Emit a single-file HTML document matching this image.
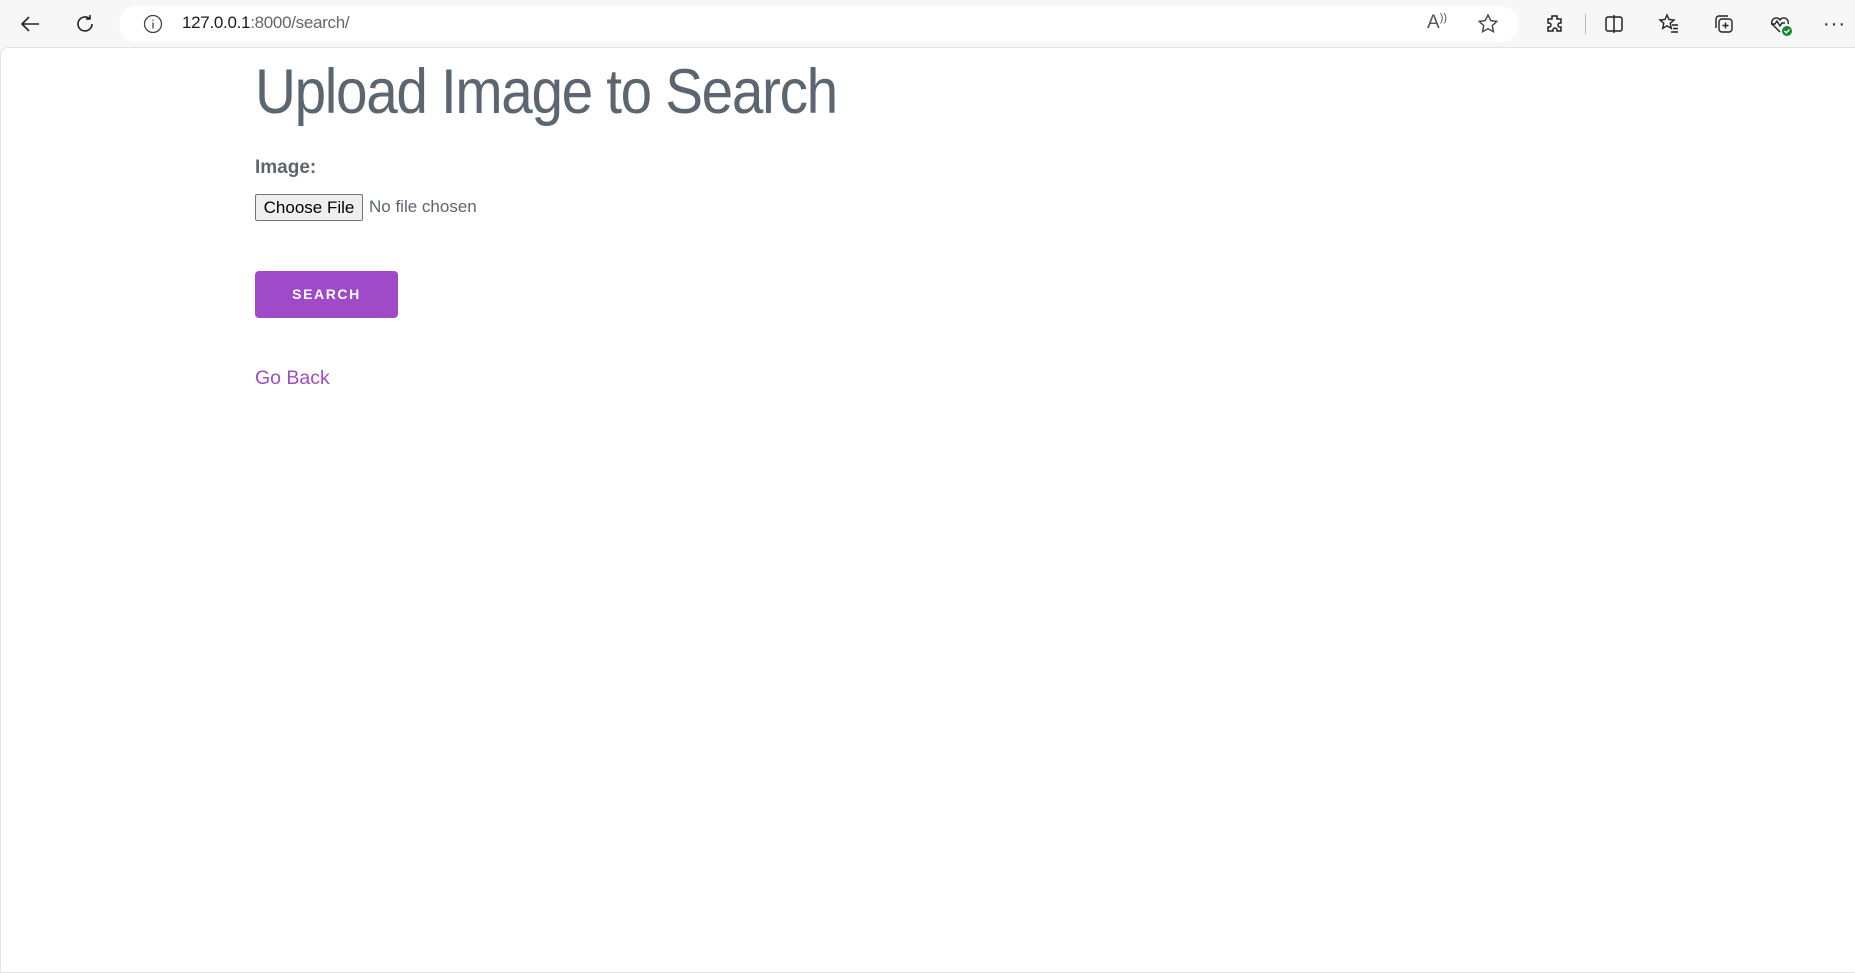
<!DOCTYPE html>
<html><head><meta charset="utf-8"><style>
*{margin:0;padding:0;box-sizing:border-box}
html,body{width:1855px;height:973px;overflow:hidden;background:#f7f7f7;font-family:"Liberation Sans",Arial,sans-serif}
.bar{position:absolute;left:0;top:0;width:1855px;height:48px;background:#f7f7f7}
.addr{position:absolute;left:119px;top:6px;width:1400px;height:36px;background:#fff;border-radius:18px}
.url{position:absolute;left:182px;top:13px;font-size:17px;color:#1a1a1a;letter-spacing:-0.3px}
.url span{color:#666}
.ic{position:absolute;top:12px}
.page{position:absolute;left:0;top:47px;width:1855px;height:926px;background:#fff;border-top-left-radius:8px;border-top:1px solid #e3e3e3;border-left:1px solid #e3e3e3;border-bottom:1px solid #e3e3e3}
h1{position:absolute;left:255px;top:56px;font-size:63px;font-weight:400;color:#5b6670;white-space:nowrap;letter-spacing:-1.5px;transform:scaleX(0.9);transform-origin:left top}
.lbl{position:absolute;left:255px;top:157px;font-size:19px;font-weight:bold;color:#5b6670}
.fbtn{position:absolute;left:255px;top:194px;width:108px;height:27px;background:#efefef;border:1px solid #767676;border-radius:2px;font-size:17px;color:#000;text-align:center;line-height:25px}
.fno{position:absolute;left:369px;top:197px;font-size:17px;color:#5b6670}
.sb{position:absolute;left:255px;top:271px;width:143px;height:47px;background:#9f4bc9;border-radius:4px;color:#fff;font-size:14px;font-weight:bold;letter-spacing:1.6px;text-align:center;line-height:47px}
.back{position:absolute;left:255px;top:367px;font-size:19.5px;color:#a04bc8}
</style></head><body>
<div class="bar">
<svg class="ic" style="left:18px" width="24" height="24" viewBox="0 0 24 24" fill="none" stroke="#222" stroke-width="1.6"><path d="M21 12H4M11 5l-7 7 7 7"/></svg>
<svg class="ic" style="left:73px" width="24" height="24" viewBox="0 0 24 24" fill="none" stroke="#222" stroke-width="1.6"><path d="M19 12a7 7 0 1 1-2.5-5.4M17 3v4h-4"/></svg>
<div class="addr"></div>
<svg class="ic" style="left:142px;top:13px" width="22" height="22" viewBox="0 0 22 22" fill="none" stroke="#444" stroke-width="1.3"><circle cx="11" cy="11" r="8.5"/><path d="M11 9.5v6M11 6.5v1.2"/></svg>
<div class="url">127.0.0.1<span>:8000/search/</span></div>
<div style="position:absolute;left:1427px;top:12px;font-size:19px;color:#555">A<span style="font-size:11px;vertical-align:top">))</span></div>
<svg class="ic" style="left:1476px" width="24" height="24" viewBox="0 0 24 24" fill="none" stroke="#444" stroke-width="1.4"><path d="M12 3l2.7 5.6 6.1.8-4.5 4.2 1.1 6.1L12 16.8 6.6 19.7l1.1-6.1L3.2 9.4l6.1-.8z"/></svg>
<svg class="ic" style="left:1543px" width="24" height="24" viewBox="0 0 24 24" fill="none" stroke="#222" stroke-width="1.5"><path d="M9 4h5v3a2 2 0 1 0 0 0h0v-0h4v4h-1a2 2 0 1 0 0 4h1v4h-4v-1a2 2 0 1 0-4 0v1H5v-4h1a2 2 0 1 0 0-4H5V7h4z"/></svg>
<div style="position:absolute;left:1585px;top:14px;width:1px;height:20px;background:#bbb"></div>
<svg class="ic" style="left:1602px" width="24" height="24" viewBox="0 0 24 24" fill="none" stroke="#222" stroke-width="1.5"><rect x="4" y="5" width="16" height="14" rx="2"/><path d="M12 3v18"/></svg>
<svg class="ic" style="left:1657px" width="24" height="24" viewBox="0 0 24 24" fill="none" stroke="#222" stroke-width="1.4"><path d="M10 3l2 4.5 5 .5-3.8 3.3 1.1 5L10 13.8 5.7 16.3l1.1-5L3 8l5-.5z"/><path d="M15 13h6M16 16.5h5M14 20h7"/></svg>
<svg class="ic" style="left:1712px" width="24" height="24" viewBox="0 0 24 24" fill="none" stroke="#222" stroke-width="1.4"><rect x="7" y="7" width="13" height="13" rx="3"/><path d="M4 16V7a3 3 0 0 1 3-3h9M13.5 10.5v6M10.5 13.5h6"/></svg>
<svg class="ic" style="left:1768px" width="26" height="26" viewBox="0 0 26 26" fill="none" stroke="#222" stroke-width="1.4"><path d="M12 20L4 12a4.5 4.5 0 0 1 8-4 4.5 4.5 0 0 1 8 4"/><path d="M3 12h4l2-3 3 5 2-3h3"/><circle cx="19" cy="19" r="5" fill="#138a30" stroke="none"/><path d="M16.5 19l1.8 1.8 3.2-3.3" stroke="#fff" stroke-width="1.4"/></svg>
<div style="position:absolute;left:1823px;top:13px;font-size:20px;color:#222;letter-spacing:1px">···</div>
</div>
<div class="page"></div>
<h1>Upload Image to Search</h1>
<div class="lbl">Image:</div>
<div class="fbtn">Choose File</div>
<div class="fno">No file chosen</div>
<div class="sb">SEARCH</div>
<div class="back">Go Back</div>
</body></html>
